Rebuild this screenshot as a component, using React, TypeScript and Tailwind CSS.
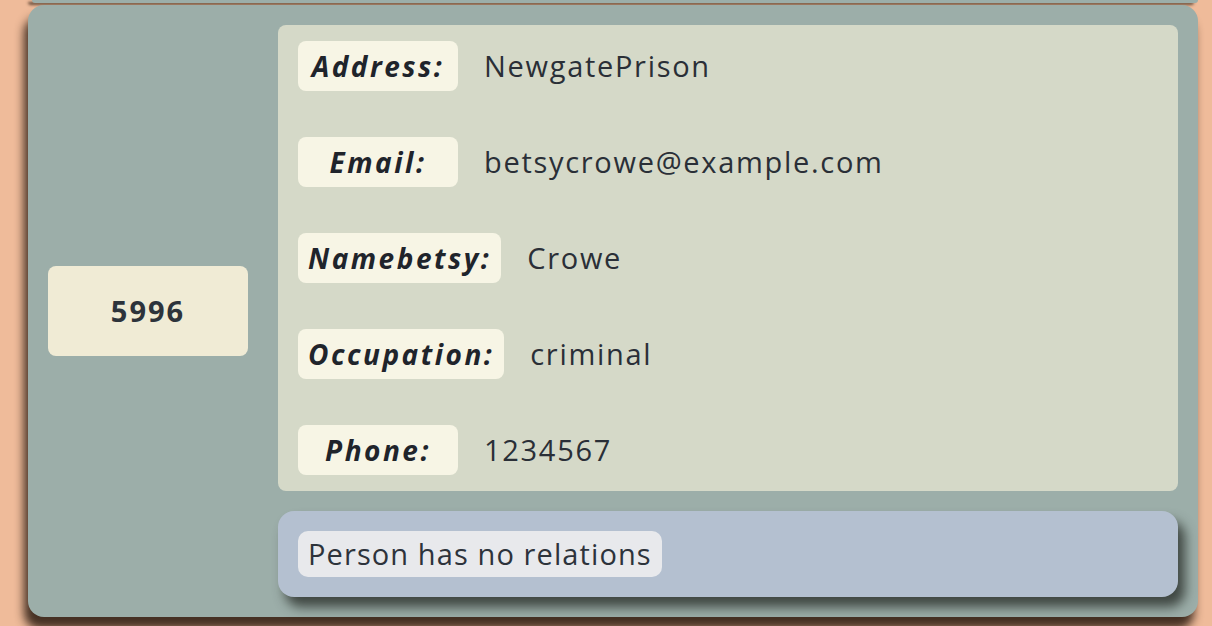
import React from 'react';

const fields = [
    { label: "Address:", value: "NewgatePrison" },
    { label: "Email:", value: "betsycrowe@example.com" },
    { label: "Namebetsy:", value: "Crowe" },
    { label: "Occupation:", value: "criminal" },
    { label: "Phone:", value: "1234567" },
];

const PersonCard = () => {
    return (
        <div className="flex gap-[30px] rounded-[16px] bg-[#9caea9] p-5 shadow-[-4px_12px_10px_rgba(40,25,15,0.85)]">
            <div className="flex w-[200px] shrink-0 items-center">
                <div className="flex h-[90px] w-full items-center justify-center rounded-[8px] bg-[#f0ebd5] text-[29px] font-bold tracking-[2px] text-[#2d333b]">
                    5996
                </div>
            </div>

            <div className="flex flex-1 flex-col gap-5">
                <div className="flex flex-col gap-[46px] rounded-[8px] bg-[#d5d9c8] p-4 px-5">
                    {fields.map((f) => (
                        <div key={f.label} className="flex items-center gap-[26px]">
                            <span className="flex h-[50px] min-w-[160px] items-center justify-center rounded-[8px] bg-[#f7f5e5] px-2.5 text-[28px] font-bold italic tracking-[2.5px] text-[#1f242b]">
                                {f.label}
                            </span>
                            <span className="text-[29px] tracking-[1.7px] text-[#2a2f37]">{f.value}</span>
                        </div>
                    ))}
                </div>

                <div className="rounded-[16px] bg-[#b4c0d0] p-5 shadow-[7px_10px_12px_rgba(40,45,40,0.8)]">
                    <span className="inline-block rounded-[10px] bg-[#e8e9ec] px-2.5 py-[3px] text-[29px] leading-[40px] tracking-[1.1px] text-[#2d333b]">
                        Person has no relations
                    </span>
                </div>
            </div>
        </div>
    );
};

export default function App() {
    return (
        <div
            className="h-[626px] overflow-hidden bg-[#efbb9a]"
            style={{ fontFamily: '"Open Sans", "DejaVu Sans", sans-serif' }}
        >
            <div className="flex flex-col gap-[2px] pl-[28px] pr-[14px]">
                <div className="ml-[4px] h-[3px] rounded-b-[16px] bg-[#9caea9] shadow-[-4px_2px_3px_rgba(40,25,15,0.7)]"></div>
                <PersonCard />
            </div>
        </div>
    );
}
